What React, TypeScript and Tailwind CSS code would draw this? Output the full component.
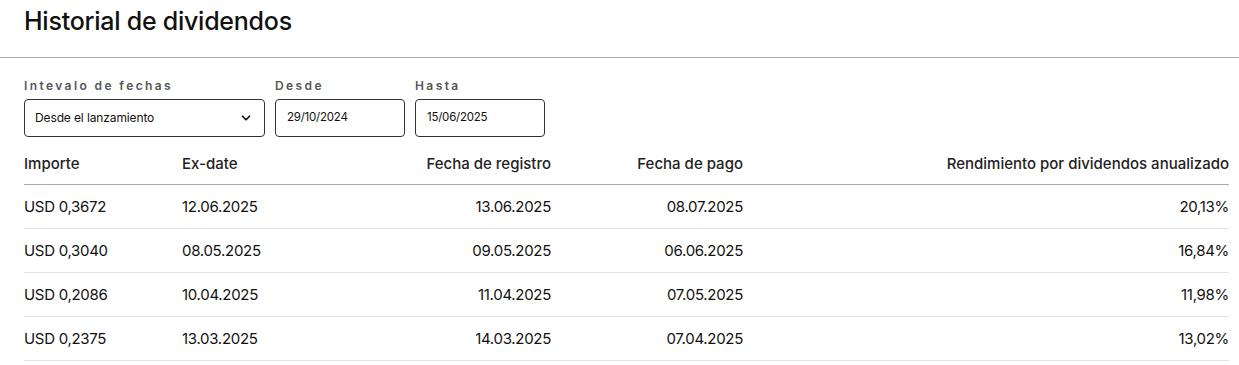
import { ChevronDown } from "lucide-react";

const rows = [
  { amount: "USD 0,3672", exDate: "12.06.2025", record: "13.06.2025", pay: "08.07.2025", yieldPct: "20,13%" },
  { amount: "USD 0,3040", exDate: "08.05.2025", record: "09.05.2025", pay: "06.06.2025", yieldPct: "16,84%" },
  { amount: "USD 0,2086", exDate: "10.04.2025", record: "11.04.2025", pay: "07.05.2025", yieldPct: "11,98%" },
  { amount: "USD 0,2375", exDate: "13.03.2025", record: "14.03.2025", pay: "07.04.2025", yieldPct: "13,02%" },
];

const cols = "grid grid-cols-[158px_200px_169px_192px_1fr] items-center";
const labelCls = "block text-[12px] font-semibold tracking-[0.2em] text-[#555] leading-[16px] mb-[5px]";

export default function App() {
  return (
    <div className="bg-white w-[1239px] h-[365px] text-[#111] font-['Inter',sans-serif] overflow-hidden">
      {/* Title */}
      <div className="h-[58px] border-b border-[#a9adb2] px-6 pt-[5px]">
        <h1 className="text-[25px] font-medium tracking-[-0.01em] leading-[32px]">Historial de dividendos</h1>
      </div>

      <div className="pl-6 pr-[10px]">
        {/* Filters */}
        <div className="flex gap-[10px] pt-[20px]">
          <div className="w-[241px]">
            <label className={labelCls}>Intevalo de fechas</label>
            <div className="h-[38px] border border-[#333] rounded-[4px] flex items-center justify-between pl-[10px] pr-[11px]">
              <span className="text-[12px] tracking-[-0.01em]">Desde el lanzamiento</span>
              <ChevronDown size={14} strokeWidth={3} />
            </div>
          </div>
          <div className="w-[130px]">
            <label className={labelCls}>Desde</label>
            <div className="h-[38px] border border-[#333] rounded-[4px] flex items-center pl-[11px]">
              <span className="text-[11.5px] tracking-[-0.02em]">29/10/2024</span>
            </div>
          </div>
          <div className="w-[130px]">
            <label className={labelCls}>Hasta</label>
            <div className="h-[38px] border border-[#333] rounded-[4px] flex items-center pl-[11px]">
              <span className="text-[11.5px] tracking-[-0.02em]">15/06/2025</span>
            </div>
          </div>
        </div>

        {/* Table */}
        <div className="mt-[4px] text-[15px] tracking-[-0.02em]">
          <div className={`${cols} h-[44px] pt-[3px] border-b border-[#a9adb2] font-medium text-[#222] tracking-[0em]`}>
            <div>Importe</div>
            <div>Ex-date</div>
            <div className="text-right">Fecha de registro</div>
            <div className="text-right">Fecha de pago</div>
            <div className="text-right">Rendimiento por dividendos anualizado</div>
          </div>
          {rows.map((r, i) => (
            <div key={i} className={`${cols} h-[44px] pt-[1px] border-b border-[#e3e3e3]`}>
              <div>{r.amount}</div>
              <div>{r.exDate}</div>
              <div className="text-right">{r.record}</div>
              <div className="text-right">{r.pay}</div>
              <div className="text-right">{r.yieldPct}</div>
            </div>
          ))}
        </div>
      </div>
    </div>
  );
}
